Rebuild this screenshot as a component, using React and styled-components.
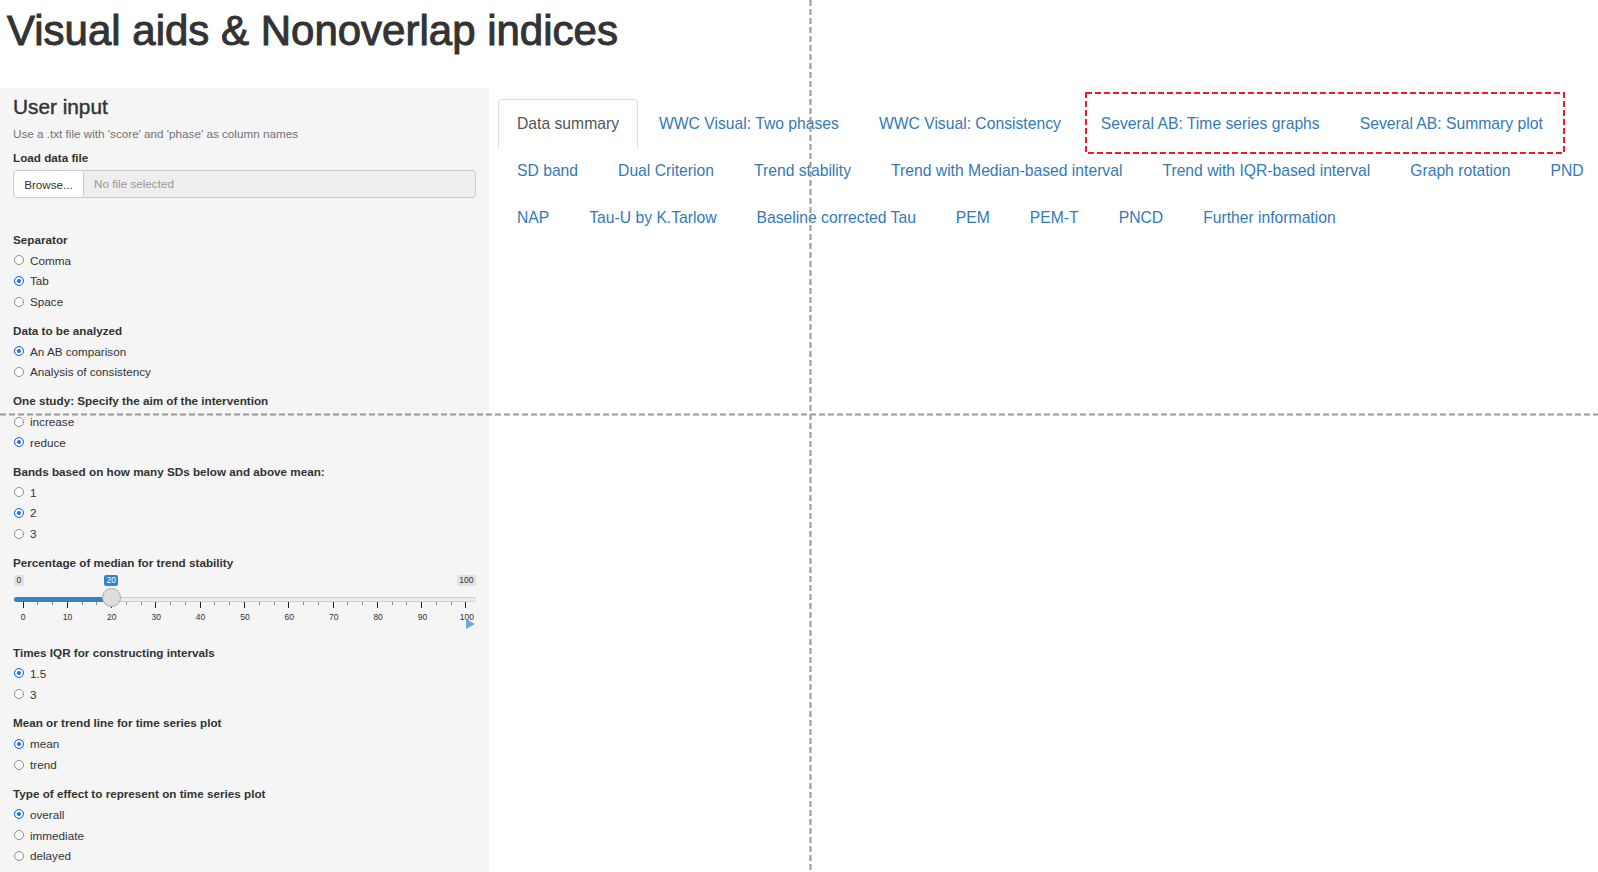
import React from 'react';
import styled, { createGlobalStyle } from 'styled-components';

const GlobalStyle = createGlobalStyle`
  html, body {
    margin: 0;
    padding: 0;
    overflow: hidden;
    background: #fff;
  }
  body {
    font-family: "Liberation Sans", Helvetica, Arial, sans-serif;
    color: #333;
  }
  * {
    box-sizing: border-box;
  }
`;

const Title = styled.h1`
  margin: 0;
  height: 88px;
  padding: 7px 0 0 7px;
  font-size: 42px;
  line-height: 48px;
  font-weight: 400;
  color: #333;
  -webkit-text-stroke: 1px #333;
  white-space: nowrap;
`;

const Layout = styled.div`
  display: flex;
  min-height: calc(100vh - 88px);
`;

const Sidebar = styled.aside`
  flex: none;
  width: 489px;
  background: #f5f5f5;
  padding: 7px 13px 0 13px;
  font-size: 11.7px;
`;

const Main = styled.main`
  flex: 1;
  min-width: 0;
  padding: 11px 0 0 9px;
`;

const PanelTitle = styled.h3`
  margin: 0;
  font-size: 20.8px;
  line-height: 24px;
  font-weight: 400;
  color: #333;
  -webkit-text-stroke: 0.4px #333;
`;

const HelpText = styled.p`
  margin: 6.5px 0 0 0;
  line-height: 16px;
  color: #737373;
`;

const Label = styled.div`
  margin-top: ${(p) => p.$top || 0}px;
  font-weight: 700;
  line-height: 16px;
  color: #333;
  white-space: nowrap;
`;

const FileRow = styled.div`
  display: flex;
  height: 28px;
  margin-top: 4px;
`;

const BrowseButton = styled.button`
  flex: none;
  width: 71px;
  height: 28px;
  border: 1px solid #ccc;
  border-radius: 4px 0 0 4px;
  background: #fff;
  color: #333;
  font-family: inherit;
  font-size: 11.7px;
  padding: 0;
`;

const FileName = styled.div`
  flex: 1;
  height: 28px;
  border: 1px solid #ccc;
  border-left: none;
  border-radius: 0 4px 4px 0;
  background: #eee;
  color: #999;
  padding-left: 10px;
  line-height: 26px;
`;

const Group = styled.div`
  margin-top: ${(p) => (p.$first ? 33.5 : 10.8)}px;
`;

const RadioList = styled.div`
  margin-top: 2.3px;
`;

const RadioRow = styled.label`
  display: flex;
  align-items: center;
  height: 20.7px;
  color: #333;
`;

const RadioCircle = styled.span`
  flex: none;
  width: 10px;
  height: 10px;
  margin-left: 1px;
  margin-right: 6px;
  border-radius: 50%;
  border: 1px solid ${(p) => (p.$checked ? '#1b6ef3' : '#8e8e8e')};
  background: ${(p) => (p.$checked ? '#1b6ef3' : '#fff')};
  box-shadow: ${(p) => (p.$checked ? 'inset 0 0 0 2px #fff' : 'none')};
`;

const SliderBlock = styled.div`
  height: 63.3px;
`;

const SliderTop = styled.div`
  position: relative;
  height: 31px;
`;

const ValueTag = styled.span`
  position: absolute;
  top: 4px;
  height: 11px;
  padding: 0 2.5px;
  border-radius: 2px;
  font-size: 8.5px;
  line-height: 11px;
  background: ${(p) => (p.$active ? '#3583c6' : '#e1e1e1')};
  color: ${(p) => (p.$active ? '#fff' : '#333')};
`;

const Track = styled.div`
  position: absolute;
  left: 1px;
  right: 0;
  top: 26.5px;
  height: 5px;
  border: 1px solid #cfcfcf;
  border-radius: 3px;
  background: #ececec;
`;

const TrackFill = styled.div`
  position: absolute;
  left: 1px;
  top: 26.5px;
  height: 5px;
  border-radius: 3px 0 0 3px;
  background: #3583c6;
`;

const Handle = styled.div`
  position: absolute;
  top: 17.5px;
  width: 19px;
  height: 19px;
  border-radius: 50%;
  border: 1px solid #a9a9a9;
  background: #dedede;
`;

const TickRow = styled.div`
  display: flex;
  justify-content: space-between;
  align-items: flex-start;
  width: 444px;
  height: 7px;
  margin-left: 9.5px;
`;

const Tick = styled.span`
  width: 1px;
  height: ${(p) => (p.$major ? 6 : 3.5)}px;
  background: ${(p) => (p.$major ? '#222' : '#8a8a8a')};
`;

const TickLabels = styled.div`
  display: flex;
  justify-content: space-between;
  width: 464px;
  margin-top: 2.8px;
`;

const TickLabel = styled.span`
  width: 20px;
  text-align: center;
  font-size: 8.5px;
  line-height: 10px;
  color: #333;
`;

const PlayRow = styled.div`
  display: flex;
  justify-content: flex-end;
  margin-top: -2.1px;
  padding-right: 1px;
  height: 10px;
`;

const TabRow = styled.div`
  display: flex;
  height: 47px;
`;

const Tab = styled.a`
  flex: none;
  display: block;
  height: 49px;
  margin-right: 2px;
  padding: 0 18px;
  border: 1px solid ${(p) => (p.$active ? '#ddd' : 'transparent')};
  border-bottom-color: transparent;
  border-radius: 4px 4px 0 0;
  background: ${(p) => (p.$active ? '#fff' : 'transparent')};
  color: ${(p) => (p.$active ? '#555' : '#337ab7')};
  font-size: 15.7px;
  line-height: 47px;
  white-space: nowrap;
  text-decoration: none;
`;

const Overlay = styled.svg`
  position: fixed;
  left: 0;
  top: 0;
  width: 100vw;
  height: 100vh;
  pointer-events: none;
  z-index: 10;
`;

const tabRows = [
  ['Data summary', 'WWC Visual: Two phases', 'WWC Visual: Consistency', 'Several AB: Time series graphs', 'Several AB: Summary plot'],
  ['SD band', 'Dual Criterion', 'Trend stability', 'Trend with Median-based interval', 'Trend with IQR-based interval', 'Graph rotation', 'PND'],
  ['NAP', 'Tau-U by K.Tarlow', 'Baseline corrected Tau', 'PEM', 'PEM-T', 'PNCD', 'Further information'],
];

const groupsBefore = [
  { label: 'Separator', options: ['Comma', 'Tab', 'Space'], checked: 'Tab' },
  { label: 'Data to be analyzed', options: ['An AB comparison', 'Analysis of consistency'], checked: 'An AB comparison' },
  { label: 'One study: Specify the aim of the intervention', options: ['increase', 'reduce'], checked: 'reduce' },
  { label: 'Bands based on how many SDs below and above mean:', options: ['1', '2', '3'], checked: '2' },
];

const groupsAfter = [
  { label: 'Times IQR for constructing intervals', options: ['1.5', '3'], checked: '1.5' },
  { label: 'Mean or trend line for time series plot', options: ['mean', 'trend'], checked: 'mean' },
  { label: 'Type of effect to represent on time series plot', options: ['overall', 'immediate', 'delayed'], checked: 'overall' },
];

const RadioGroup = ({ label, options, checked, first }) => (
  <Group $first={first}>
    <Label>{label}</Label>
    <RadioList>
      {options.map((o) => (
        <RadioRow key={o}>
          <RadioCircle $checked={o === checked} />
          {o}
        </RadioRow>
      ))}
    </RadioList>
  </Group>
);

// track is 462px wide, 0..100
const Slider = ({ value, min = 0, max = 100 }) => {
  const handleX = 5 + ((value - min) / (max - min)) * 465;
  const ticks = Array.from({ length: 31 }, (_, i) => i);
  const labels = Array.from({ length: 11 }, (_, i) => i * 10);
  return (
    <SliderBlock>
      <SliderTop>
        <Track />
        <TrackFill style={{ width: handleX }} />
        <ValueTag style={{ left: 1 }}>{min}</ValueTag>
        <ValueTag $active style={{ left: handleX - 7 }}>{value}</ValueTag>
        <ValueTag style={{ right: 0 }}>{max}</ValueTag>
        <Handle style={{ left: handleX - 9.5 }} />
      </SliderTop>
      <TickRow>
        {ticks.map((t) => (
          <Tick key={t} $major={t % 3 === 0} />
        ))}
      </TickRow>
      <TickLabels>
        {labels.map((l) => (
          <TickLabel key={l}>{l}</TickLabel>
        ))}
      </TickLabels>
      <PlayRow>
        <svg width="9" height="10" viewBox="0 0 9 10">
          <polygon points="0,0 9,5 0,10" fill="#6ea7d8" />
        </svg>
      </PlayRow>
    </SliderBlock>
  );
};

export default function App() {
  return (
    <>
      <GlobalStyle />
      <Title>Visual aids &amp; Nonoverlap indices</Title>
      <Layout>
        <Sidebar>
          <PanelTitle>User input</PanelTitle>
          <HelpText>Use a .txt file with 'score' and 'phase' as column names</HelpText>
          <Label $top={8.5}>Load data file</Label>
          <FileRow>
            <BrowseButton>Browse...</BrowseButton>
            <FileName>No file selected</FileName>
          </FileRow>
          {groupsBefore.map((g, i) => (
            <RadioGroup key={g.label} {...g} first={i === 0} />
          ))}
          <Group>
            <Label>Percentage of median for trend stability</Label>
            <Slider value={20} />
          </Group>
          {groupsAfter.map((g) => (
            <RadioGroup key={g.label} {...g} />
          ))}
        </Sidebar>
        <Main>
          {tabRows.map((row, r) => (
            <TabRow key={r}>
              {row.map((t) => (
                <Tab key={t} $active={t === 'Data summary'}>
                  {t}
                </Tab>
              ))}
            </TabRow>
          ))}
        </Main>
      </Layout>
      <Overlay viewBox="0 0 1598 872" preserveAspectRatio="none">
        <line x1="810.5" y1="0" x2="810.5" y2="872" stroke="#9a9a9a" strokeWidth="2" strokeDasharray="6 3" />
        <line x1="0" y1="414.5" x2="1598" y2="414.5" stroke="#9a9a9a" strokeWidth="2" strokeDasharray="6 3" />
        <rect x="1086" y="93" width="478" height="60" fill="none" stroke="#ec1c24" strokeWidth="2" strokeDasharray="6 3" />
      </Overlay>
    </>
  );
}
